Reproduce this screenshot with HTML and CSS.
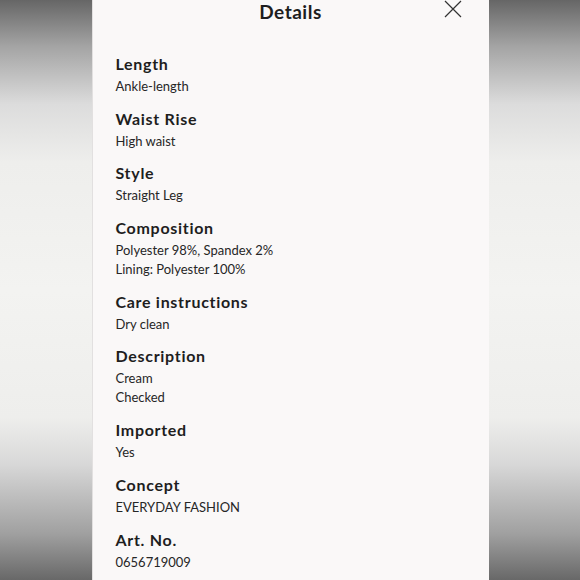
FILE: index.html
```html
<!DOCTYPE html>
<html lang="en">
<head>
  <meta charset="UTF-8">
  <title>Details</title>
  <link rel="stylesheet" href="styles.css">
</head>
<body>
  <div class="sheet">
    <header class="sheet-head">
      <h1>Details</h1>
      <button class="close" aria-label="Close">
        <svg width="18" height="18" viewBox="0 0 18 18"><path d="M1 1 L17 17 M17 1 L1 17" stroke="#333" stroke-width="1.2" fill="none"/></svg>
      </button>
    </header>

    <dl class="details">
      <div class="detail">
        <dt>Length</dt>
        <dd>Ankle-length</dd>
      </div>
      <div class="detail">
        <dt>Waist Rise</dt>
        <dd>High waist</dd>
      </div>
      <div class="detail">
        <dt>Style</dt>
        <dd>Straight Leg</dd>
      </div>
      <div class="detail">
        <dt>Composition</dt>
        <dd>Polyester 98%, Spandex 2%</dd>
        <dd>Lining: Polyester 100%</dd>
      </div>
      <div class="detail">
        <dt>Care instructions</dt>
        <dd>Dry clean</dd>
      </div>
      <div class="detail">
        <dt>Description</dt>
        <dd>Cream</dd>
        <dd>Checked</dd>
      </div>
      <div class="detail">
        <dt>Imported</dt>
        <dd>Yes</dd>
      </div>
      <div class="detail">
        <dt>Concept</dt>
        <dd>EVERYDAY FASHION</dd>
      </div>
      <div class="detail">
        <dt>Art. No.</dt>
        <dd>0656719009</dd>
      </div>
    </dl>
  </div>
</body>
</html>
```

FILE: styles.css
```css
html, body { height: 100%; }
body {
  margin: 0;
  font-family: "Lato", "Noto Sans", sans-serif;
  color: #1e1e1e;
  background: linear-gradient(to bottom, #666 0%, #a4a4a4 8%, #dcdcdc 18%, #eeeeec 28%, #f3f3f1 50%, #eeeeec 72%, #d8d8d8 80%, #a0a0a0 92%, #686868 100%);
  overflow: hidden;
}
.sheet {
  width: 397px;
  height: 100%;
  margin: 0 auto;
  background: #faf8f8;
  border-left: 1px solid #e2e0e0;
  box-sizing: border-box;
}
.sheet-head {
  position: relative;
  height: 24px;
  text-align: center;
}
.sheet-head h1 { margin: 0; font-size: 19px; line-height: 24px; font-weight: 700; letter-spacing: 0.5px; }
.close {
  position: absolute;
  top: 0;
  right: 27px;
  padding: 0;
  border: none;
  background: none;
  cursor: pointer;
}
.details {
  margin: 29px 0 0;
  padding: 0 0 0 23px;
  display: flex;
  flex-direction: column;
  gap: 11.7px;
}
.detail dt { font-size: 16px; line-height: 22px; font-weight: 700; letter-spacing: 0.7px; margin-bottom: 2px; }
.detail dd { margin: 0; font-size: 13px; line-height: 19px; color: #262626; }
```
